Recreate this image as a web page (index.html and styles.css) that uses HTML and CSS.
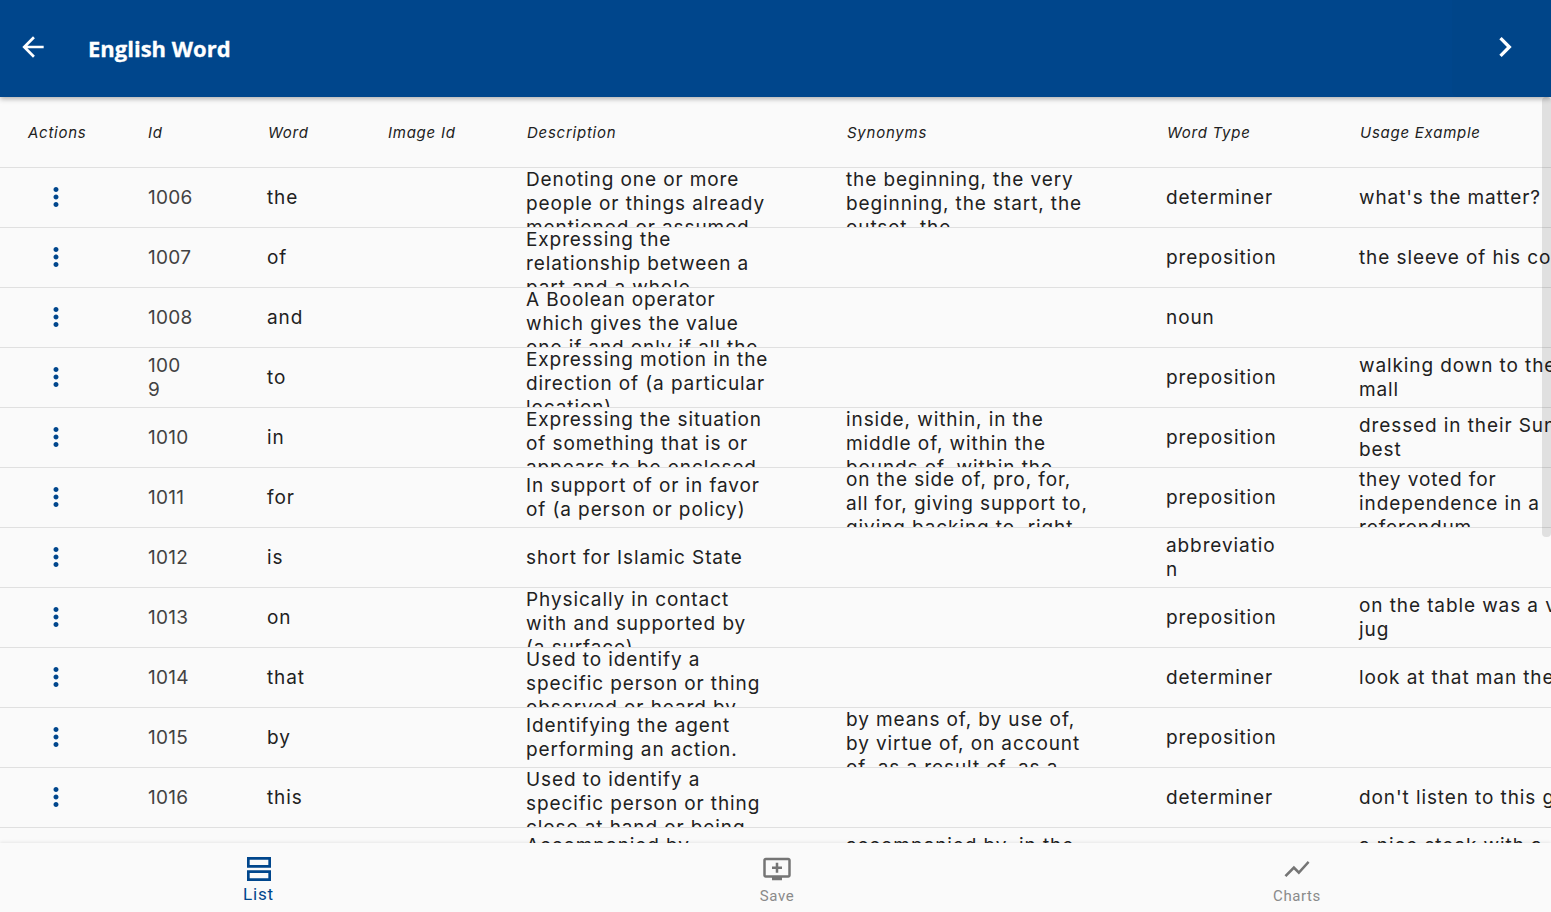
FILE: index.html
```html
<!DOCTYPE html>
<html lang="en">
<head>
    <meta charset="UTF-8">
    <meta name="viewport" content="width=device-width, initial-scale=1.0">
    <title>English Word</title>
    <link rel="stylesheet" href="styles.css">
</head>
<body>
    <svg class="icon-defs" width="0" height="0">
        <symbol id="more-vert" viewBox="0 0 24 24"><path d="M12 8c1.1 0 2-.9 2-2s-.9-2-2-2-2 .9-2 2 .9 2 2 2zm0 2c-1.1 0-2 .9-2 2s.9 2 2 2 2-.9 2-2-.9-2-2-2zm0 6c-1.1 0-2 .9-2 2s.9 2 2 2 2-.9 2-2-.9-2-2-2z"/></symbol>
    </svg>

    <header class="top-bar">
        <button class="back-btn" aria-label="Back">
            <svg viewBox="0 0 24 24"><path d="M20 11H7.83l5.59-5.59L12 4l-8 8 8 8 1.41-1.41L7.83 13H20v-2z"/></svg>
        </button>
        <h1 class="page-title">English Word</h1>
        <button class="next-btn" aria-label="Next">
            <svg viewBox="0 0 24 24"><path d="M10 6L8.59 7.41 13.17 12l-4.58 4.59L10 18l6-6z"/></svg>
        </button>
    </header>

    <main class="table-area">
        <div class="scroll-thumb"></div>
        <div class="word-table">
            <div class="row head-row">
                <div class="cell">Actions</div>
                <div class="cell">Id</div>
                <div class="cell">Word</div>
                <div class="cell">Image Id</div>
                <div class="cell">Description</div>
                <div class="cell">Synonyms</div>
                <div class="cell">Word Type</div>
                <div class="cell">Usage Example</div>
            </div>

            <div class="row">
                <div class="cell"><svg class="kebab"><use href="#more-vert"/></svg></div>
                <div class="cell id-cell">1006</div>
                <div class="cell">the</div>
                <div class="cell"></div>
                <div class="cell">Denoting one or more<br>people or things already<br>mentioned or assumed</div>
                <div class="cell">the beginning, the very<br>beginning, the start, the<br>outset, the</div>
                <div class="cell">determiner</div>
                <div class="cell">what's the matter?</div>
            </div>
            <div class="row">
                <div class="cell"><svg class="kebab"><use href="#more-vert"/></svg></div>
                <div class="cell id-cell">1007</div>
                <div class="cell">of</div>
                <div class="cell"></div>
                <div class="cell">Expressing the<br>relationship between a<br>part and a whole</div>
                <div class="cell"></div>
                <div class="cell">preposition</div>
                <div class="cell">the sleeve of his coat</div>
            </div>
            <div class="row">
                <div class="cell"><svg class="kebab"><use href="#more-vert"/></svg></div>
                <div class="cell id-cell">1008</div>
                <div class="cell">and</div>
                <div class="cell"></div>
                <div class="cell">A Boolean operator<br>which gives the value<br>one if and only if all the</div>
                <div class="cell"></div>
                <div class="cell">noun</div>
                <div class="cell"></div>
            </div>
            <div class="row">
                <div class="cell"><svg class="kebab"><use href="#more-vert"/></svg></div>
                <div class="cell id-cell">100<br>9</div>
                <div class="cell">to</div>
                <div class="cell"></div>
                <div class="cell">Expressing motion in the<br>direction of (a particular<br>location)</div>
                <div class="cell"></div>
                <div class="cell">preposition</div>
                <div class="cell">walking down to the<br>mall</div>
            </div>
            <div class="row">
                <div class="cell"><svg class="kebab"><use href="#more-vert"/></svg></div>
                <div class="cell id-cell">1010</div>
                <div class="cell">in</div>
                <div class="cell"></div>
                <div class="cell">Expressing the situation<br>of something that is or<br>appears to be enclosed</div>
                <div class="cell">inside, within, in the<br>middle of, within the<br>bounds of, within the</div>
                <div class="cell">preposition</div>
                <div class="cell">dressed in their Sunday<br>best</div>
            </div>
            <div class="row">
                <div class="cell"><svg class="kebab"><use href="#more-vert"/></svg></div>
                <div class="cell id-cell">1011</div>
                <div class="cell">for</div>
                <div class="cell"></div>
                <div class="cell">In support of or in favor<br>of (a person or policy)</div>
                <div class="cell">on the side of, pro, for,<br>all for, giving support to,<br>giving backing to, right</div>
                <div class="cell">preposition</div>
                <div class="cell">they voted for<br>independence in a<br>referendum</div>
            </div>
            <div class="row">
                <div class="cell"><svg class="kebab"><use href="#more-vert"/></svg></div>
                <div class="cell id-cell">1012</div>
                <div class="cell">is</div>
                <div class="cell"></div>
                <div class="cell">short for Islamic State</div>
                <div class="cell"></div>
                <div class="cell">abbreviatio<br>n</div>
                <div class="cell"></div>
            </div>
            <div class="row">
                <div class="cell"><svg class="kebab"><use href="#more-vert"/></svg></div>
                <div class="cell id-cell">1013</div>
                <div class="cell">on</div>
                <div class="cell"></div>
                <div class="cell">Physically in contact<br>with and supported by<br>(a surface)</div>
                <div class="cell"></div>
                <div class="cell">preposition</div>
                <div class="cell">on the table was a vase<br>jug</div>
            </div>
            <div class="row">
                <div class="cell"><svg class="kebab"><use href="#more-vert"/></svg></div>
                <div class="cell id-cell">1014</div>
                <div class="cell">that</div>
                <div class="cell"></div>
                <div class="cell">Used to identify a<br>specific person or thing<br>observed or heard by</div>
                <div class="cell"></div>
                <div class="cell">determiner</div>
                <div class="cell">look at that man there</div>
            </div>
            <div class="row">
                <div class="cell"><svg class="kebab"><use href="#more-vert"/></svg></div>
                <div class="cell id-cell">1015</div>
                <div class="cell">by</div>
                <div class="cell"></div>
                <div class="cell">Identifying the agent<br>performing an action.</div>
                <div class="cell">by means of, by use of,<br>by virtue of, on account<br>of, as a result of, as a</div>
                <div class="cell">preposition</div>
                <div class="cell"></div>
            </div>
            <div class="row">
                <div class="cell"><svg class="kebab"><use href="#more-vert"/></svg></div>
                <div class="cell id-cell">1016</div>
                <div class="cell">this</div>
                <div class="cell"></div>
                <div class="cell">Used to identify a<br>specific person or thing<br>close at hand or being</div>
                <div class="cell"></div>
                <div class="cell">determiner</div>
                <div class="cell">don't listen to this guy</div>
            </div>
            <div class="row">
                <div class="cell"><svg class="kebab"><use href="#more-vert"/></svg></div>
                <div class="cell id-cell">1017</div>
                <div class="cell">with</div>
                <div class="cell"></div>
                <div class="cell">Accompanied by<br>another person</div>
                <div class="cell">accompanied by, in the<br>company of, escorted by</div>
                <div class="cell">preposition</div>
                <div class="cell">a nice steak with a<br>glass of red wine</div>
            </div>
        </div>
    </main>

    <nav class="bottom-nav">
        <a class="nav-tab active" href="#">
            <svg class="list-icon" viewBox="0 0 24 24"><path fill-rule="evenodd" d="M3 3h18v8H3zM5 5v4h14V5zM3 13h18v8H3zM5 15v4h14v-4z"/></svg>
            <span>List</span>
        </a>
        <a class="nav-tab" href="#">
            <svg viewBox="0 0 24 24"><path d="M21 3H3c-1.11 0-2 .89-2 2v12c0 1.1.89 2 2 2h5v2h8v-2h5c1.1 0 1.99-.9 1.99-2L23 5c0-1.11-.9-2-2-2zm0 14H3V5h18v12zm-5-7v2h-3v3h-2v-3H8v-2h3V7h2v3h3z"/></svg>
            <span>Save</span>
        </a>
        <a class="nav-tab" href="#">
            <svg viewBox="0 0 24 24"><path d="M3.5 18.49l6-6.01 4 4L22 6.92l-1.41-1.41-7.09 7.97-4-4L2 16.99z"/></svg>
            <span>Charts</span>
        </a>
    </nav>
</body>
</html>
```

FILE: styles.css
```css
html, body {
    height: 100%;
}

body {
    margin: 0;
    display: flex;
    flex-direction: column;
    overflow: hidden;
    background-color: #fafafa;
    font-family: 'Inter', 'Liberation Sans', sans-serif;
    color: #212121;
}

.icon-defs {
    position: absolute;
}

/* top bar */
.top-bar {
    position: relative;
    z-index: 2;
    flex: 0 0 97px;
    display: flex;
    align-items: stretch;
    background-color: #00468c;
    box-shadow: 0 2px 5px rgba(0, 0, 0, 0.3);
}

.top-bar button {
    padding: 0;
    border: 0;
    background: none;
    display: flex;
}

.top-bar svg {
    fill: #fff;
}

.back-btn {
    width: 88px;
    padding-left: 17px !important;
    box-sizing: border-box;
    align-items: center;
}

.back-btn svg {
    width: 32px;
    height: 32px;
    margin-top: -4px;
}

.page-title {
    flex: 1;
    margin: -2px 0 0;
    align-self: center;
    font-family: 'Open Sans', sans-serif;
    font-size: 22px;
    font-weight: 700;
    color: #fff;
    -webkit-text-stroke: 0.3px #fff;
}

.next-btn {
    width: 99px;
    background-color: #004589 !important;
    border-radius: 0 0 0 6px;
    align-items: center;
    justify-content: center;
}

.next-btn svg {
    width: 40px;
    height: 40px;
    margin: -4px 0 0 6px;
}

/* table */
.table-area {
    position: relative;
    flex: 1;
    min-height: 0;
    overflow: hidden;
}

.scroll-thumb {
    position: absolute;
    z-index: 1;
    top: 0;
    right: 0;
    width: 9px;
    height: 440px;
    border-radius: 4px;
    background-color: rgba(0, 0, 0, 0.1);
}

.row {
    display: grid;
    grid-template-columns: 120px 120px 120px 139px 320px 320px 193px 320px;
    height: 60px;
    box-sizing: border-box;
    border-bottom: 1px solid #e0e0e0;
    font-size: 19px;
    line-height: 24px;
    letter-spacing: 0.9px;
}

.head-row {
    height: 71px;
    padding-top: 1px;
    font-size: 15px;
    font-style: italic;
    letter-spacing: 0.75px;
}

.cell {
    display: flex;
    flex-wrap: wrap;
    align-content: safe center;
    padding-left: 27px;
    overflow: hidden;
    white-space: nowrap;
}

.cell br {
    flex-basis: 100%;
}

.head-row .cell {
    padding-left: 28px;
}

.id-cell {
    padding-left: 28px;
    color: #424242;
    letter-spacing: 0.3px;
}

.kebab {
    width: 30px;
    height: 30px;
    margin: -1px 0 0 13.5px;
    fill: #00468c;
}

/* bottom nav */
.bottom-nav {
    position: relative;
    z-index: 2;
    flex: 0 0 69px;
    display: grid;
    grid-template-columns: 517px 520px 520px;
    background-color: #fafafa;
    box-shadow: 0 -1px 3px rgba(0, 0, 0, 0.08);
}

.nav-tab {
    display: flex;
    flex-direction: column;
    align-items: center;
    padding-top: 11px;
    font-family: 'Roboto', sans-serif;
    font-size: 15px;
    letter-spacing: 0.6px;
    line-height: 16px;
    color: #8a8a8a;
    text-decoration: none;
}

.nav-tab svg {
    width: 30px;
    height: 30px;
    margin-bottom: 4px;
    fill: #757575;
}

.nav-tab.active {
    font-size: 17px;
    letter-spacing: 0.8px;
    color: #00468c;
}

.nav-tab.active svg {
    width: 32px;
    height: 32px;
    fill: #00468c;
    margin: -1px 0 1px;
}
```
